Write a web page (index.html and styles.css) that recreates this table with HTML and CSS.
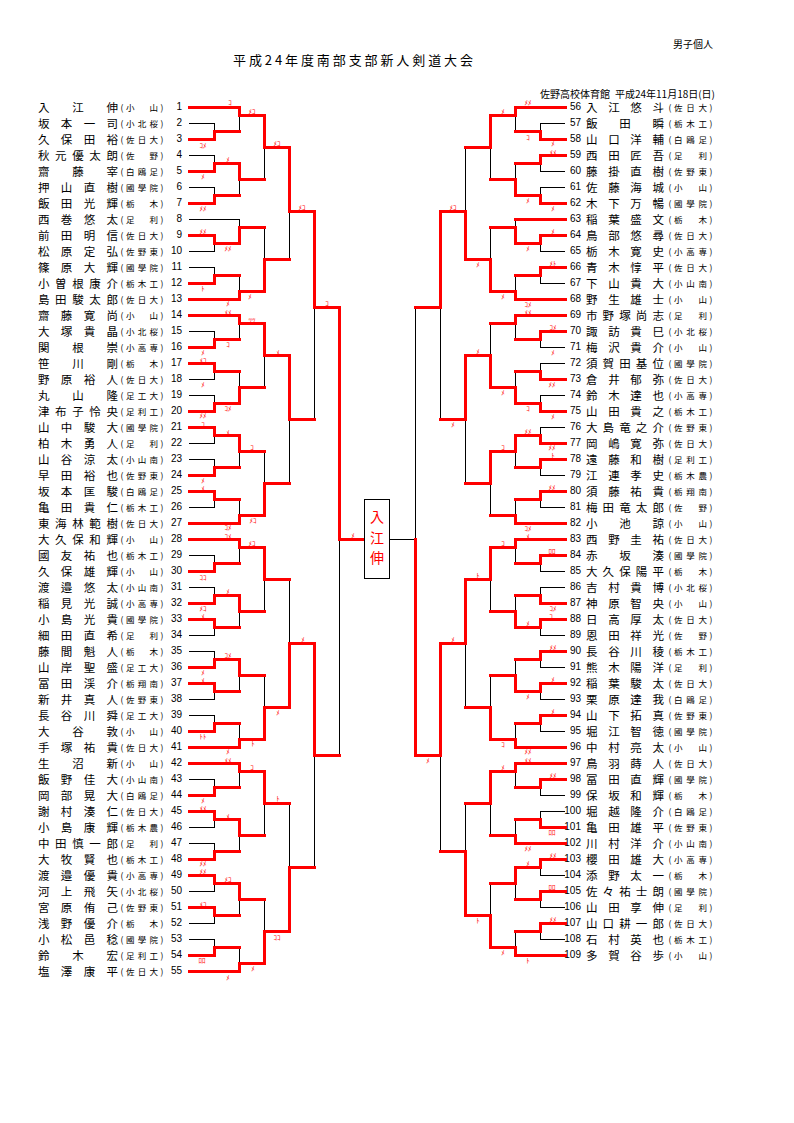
FILE: index.html
```html
<!DOCTYPE html>
<html lang="ja">
<head>
<meta charset="utf-8">
<title>平成24年度南部支部新人剣道大会</title>
<link rel="stylesheet" href="styles.css">
</head>
<body>
<div class="page">
  <header class="head">
    <div class="label">男子個人</div>
    <h1 class="title">平成24年度南部支部新人剣道大会</h1>
    <div class="venue"><span>佐野高校体育館</span><span class="date">平成24年11月18日(日)</span></div>
  </header>

  <div class="lists">
    <div class="list left">
      <div class="row"><span class="nm">入江伸</span><span class="sc">小山</span><span class="no">1</span></div>
      <div class="row"><span class="nm">坂本一司</span><span class="sc">小北桜</span><span class="no">2</span></div>
      <div class="row"><span class="nm">久保田裕</span><span class="sc">佐日大</span><span class="no">3</span></div>
      <div class="row"><span class="nm">秋元優太朗</span><span class="sc">佐野</span><span class="no">4</span></div>
      <div class="row"><span class="nm">齋藤宰</span><span class="sc">白鴎足</span><span class="no">5</span></div>
      <div class="row"><span class="nm">押山直樹</span><span class="sc">國學院</span><span class="no">6</span></div>
      <div class="row"><span class="nm">飯田光輝</span><span class="sc">栃木</span><span class="no">7</span></div>
      <div class="row"><span class="nm">西巻悠太</span><span class="sc">足利</span><span class="no">8</span></div>
      <div class="row"><span class="nm">前田明信</span><span class="sc">佐日大</span><span class="no">9</span></div>
      <div class="row"><span class="nm">松原定弘</span><span class="sc">佐野東</span><span class="no">10</span></div>
      <div class="row"><span class="nm">篠原大輝</span><span class="sc">國學院</span><span class="no">11</span></div>
      <div class="row"><span class="nm">小曽根康介</span><span class="sc">栃木工</span><span class="no">12</span></div>
      <div class="row"><span class="nm">島田駿太郎</span><span class="sc">佐日大</span><span class="no">13</span></div>
      <div class="row"><span class="nm">齋藤寛尚</span><span class="sc">小山</span><span class="no">14</span></div>
      <div class="row"><span class="nm">大塚貴晶</span><span class="sc">小北桜</span><span class="no">15</span></div>
      <div class="row"><span class="nm">関根崇</span><span class="sc">小高専</span><span class="no">16</span></div>
      <div class="row"><span class="nm">笹川剛</span><span class="sc">栃木</span><span class="no">17</span></div>
      <div class="row"><span class="nm">野原裕人</span><span class="sc">佐日大</span><span class="no">18</span></div>
      <div class="row"><span class="nm">丸山隆</span><span class="sc">足工大</span><span class="no">19</span></div>
      <div class="row"><span class="nm">津布子怜央</span><span class="sc">足利工</span><span class="no">20</span></div>
      <div class="row"><span class="nm">山中駿大</span><span class="sc">國學院</span><span class="no">21</span></div>
      <div class="row"><span class="nm">柏木勇人</span><span class="sc">足利</span><span class="no">22</span></div>
      <div class="row"><span class="nm">山谷涼太</span><span class="sc">小山南</span><span class="no">23</span></div>
      <div class="row"><span class="nm">早田裕也</span><span class="sc">佐野東</span><span class="no">24</span></div>
      <div class="row"><span class="nm">坂本匡駿</span><span class="sc">白鴎足</span><span class="no">25</span></div>
      <div class="row"><span class="nm">亀田貴仁</span><span class="sc">栃木工</span><span class="no">26</span></div>
      <div class="row"><span class="nm">東海林範樹</span><span class="sc">佐日大</span><span class="no">27</span></div>
      <div class="row"><span class="nm">大久保和輝</span><span class="sc">小山</span><span class="no">28</span></div>
      <div class="row"><span class="nm">國友祐也</span><span class="sc">栃木工</span><span class="no">29</span></div>
      <div class="row"><span class="nm">久保雄輝</span><span class="sc">小山</span><span class="no">30</span></div>
      <div class="row"><span class="nm">渡邉悠太</span><span class="sc">小山南</span><span class="no">31</span></div>
      <div class="row"><span class="nm">稲見光誠</span><span class="sc">小高専</span><span class="no">32</span></div>
      <div class="row"><span class="nm">小島光貴</span><span class="sc">國學院</span><span class="no">33</span></div>
      <div class="row"><span class="nm">細田直希</span><span class="sc">足利</span><span class="no">34</span></div>
      <div class="row"><span class="nm">藤間魁人</span><span class="sc">栃木</span><span class="no">35</span></div>
      <div class="row"><span class="nm">山岸聖盛</span><span class="sc">足工大</span><span class="no">36</span></div>
      <div class="row"><span class="nm">冨田渓介</span><span class="sc">栃翔南</span><span class="no">37</span></div>
      <div class="row"><span class="nm">新井真人</span><span class="sc">佐野東</span><span class="no">38</span></div>
      <div class="row"><span class="nm">長谷川舜</span><span class="sc">足工大</span><span class="no">39</span></div>
      <div class="row"><span class="nm">大谷敦</span><span class="sc">小山</span><span class="no">40</span></div>
      <div class="row"><span class="nm">手塚祐貴</span><span class="sc">佐日大</span><span class="no">41</span></div>
      <div class="row"><span class="nm">生沼新</span><span class="sc">小山</span><span class="no">42</span></div>
      <div class="row"><span class="nm">飯野佳大</span><span class="sc">小山南</span><span class="no">43</span></div>
      <div class="row"><span class="nm">岡部晃大</span><span class="sc">白鴎足</span><span class="no">44</span></div>
      <div class="row"><span class="nm">謝村湊仁</span><span class="sc">佐日大</span><span class="no">45</span></div>
      <div class="row"><span class="nm">小島康輝</span><span class="sc">栃木農</span><span class="no">46</span></div>
      <div class="row"><span class="nm">中田慎一郎</span><span class="sc">足利</span><span class="no">47</span></div>
      <div class="row"><span class="nm">大牧賢也</span><span class="sc">栃木工</span><span class="no">48</span></div>
      <div class="row"><span class="nm">渡邉優貴</span><span class="sc">小高専</span><span class="no">49</span></div>
      <div class="row"><span class="nm">河上飛矢</span><span class="sc">小北桜</span><span class="no">50</span></div>
      <div class="row"><span class="nm">宮原侑己</span><span class="sc">佐野東</span><span class="no">51</span></div>
      <div class="row"><span class="nm">浅野優介</span><span class="sc">栃木</span><span class="no">52</span></div>
      <div class="row"><span class="nm">小松邑稔</span><span class="sc">國學院</span><span class="no">53</span></div>
      <div class="row"><span class="nm">鈴木宏</span><span class="sc">足利工</span><span class="no">54</span></div>
      <div class="row"><span class="nm">塩澤康平</span><span class="sc">佐日大</span><span class="no">55</span></div>
    </div>

    <div class="list right">
      <div class="row"><span class="no">56</span><span class="nm">入江悠斗</span><span class="sc">佐日大</span></div>
      <div class="row"><span class="no">57</span><span class="nm">飯田瞬</span><span class="sc">栃木工</span></div>
      <div class="row"><span class="no">58</span><span class="nm">山口洋輔</span><span class="sc">白鴎足</span></div>
      <div class="row"><span class="no">59</span><span class="nm">西田匠吾</span><span class="sc">足利</span></div>
      <div class="row"><span class="no">60</span><span class="nm">藤掛直樹</span><span class="sc">佐野東</span></div>
      <div class="row"><span class="no">61</span><span class="nm">佐藤海城</span><span class="sc">小山</span></div>
      <div class="row"><span class="no">62</span><span class="nm">木下万暢</span><span class="sc">國學院</span></div>
      <div class="row"><span class="no">63</span><span class="nm">稲葉盛文</span><span class="sc">栃木</span></div>
      <div class="row"><span class="no">64</span><span class="nm">鳥部悠尋</span><span class="sc">佐日大</span></div>
      <div class="row"><span class="no">65</span><span class="nm">栃木寛史</span><span class="sc">小高専</span></div>
      <div class="row"><span class="no">66</span><span class="nm">青木惇平</span><span class="sc">佐日大</span></div>
      <div class="row"><span class="no">67</span><span class="nm">下山貴大</span><span class="sc">小山南</span></div>
      <div class="row"><span class="no">68</span><span class="nm">野生雄士</span><span class="sc">小山</span></div>
      <div class="row"><span class="no">69</span><span class="nm">市野塚尚志</span><span class="sc">足利</span></div>
      <div class="row"><span class="no">70</span><span class="nm">諏訪貴巳</span><span class="sc">小北桜</span></div>
      <div class="row"><span class="no">71</span><span class="nm">梅沢貴介</span><span class="sc">小山</span></div>
      <div class="row"><span class="no">72</span><span class="nm">須賀田基位</span><span class="sc">國學院</span></div>
      <div class="row"><span class="no">73</span><span class="nm">倉井郁弥</span><span class="sc">佐日大</span></div>
      <div class="row"><span class="no">74</span><span class="nm">鈴木達也</span><span class="sc">小高専</span></div>
      <div class="row"><span class="no">75</span><span class="nm">山田貴之</span><span class="sc">栃木工</span></div>
      <div class="row"><span class="no">76</span><span class="nm">大島竜之介</span><span class="sc">佐野東</span></div>
      <div class="row"><span class="no">77</span><span class="nm">岡嶋寛弥</span><span class="sc">佐日大</span></div>
      <div class="row"><span class="no">78</span><span class="nm">遠藤和樹</span><span class="sc">足利工</span></div>
      <div class="row"><span class="no">79</span><span class="nm">江連孝史</span><span class="sc">栃木農</span></div>
      <div class="row"><span class="no">80</span><span class="nm">須藤祐貴</span><span class="sc">栃翔南</span></div>
      <div class="row"><span class="no">81</span><span class="nm">梅田竜太郎</span><span class="sc">佐野</span></div>
      <div class="row"><span class="no">82</span><span class="nm">小池諒</span><span class="sc">小山</span></div>
      <div class="row"><span class="no">83</span><span class="nm">西野圭祐</span><span class="sc">佐日大</span></div>
      <div class="row"><span class="no">84</span><span class="nm">赤坂湊</span><span class="sc">國學院</span></div>
      <div class="row"><span class="no">85</span><span class="nm">大久保陽平</span><span class="sc">栃木</span></div>
      <div class="row"><span class="no">86</span><span class="nm">吉村貴博</span><span class="sc">小北桜</span></div>
      <div class="row"><span class="no">87</span><span class="nm">神原智央</span><span class="sc">小山</span></div>
      <div class="row"><span class="no">88</span><span class="nm">日高厚太</span><span class="sc">佐日大</span></div>
      <div class="row"><span class="no">89</span><span class="nm">恩田祥光</span><span class="sc">佐野</span></div>
      <div class="row"><span class="no">90</span><span class="nm">長谷川稜</span><span class="sc">栃木工</span></div>
      <div class="row"><span class="no">91</span><span class="nm">熊木陽洋</span><span class="sc">足利</span></div>
      <div class="row"><span class="no">92</span><span class="nm">稲葉駿太</span><span class="sc">佐日大</span></div>
      <div class="row"><span class="no">93</span><span class="nm">栗原達我</span><span class="sc">白鴎足</span></div>
      <div class="row"><span class="no">94</span><span class="nm">山下拓真</span><span class="sc">佐野東</span></div>
      <div class="row"><span class="no">95</span><span class="nm">堀江智徳</span><span class="sc">國學院</span></div>
      <div class="row"><span class="no">96</span><span class="nm">中村亮太</span><span class="sc">小山</span></div>
      <div class="row"><span class="no">97</span><span class="nm">鳥羽蒔人</span><span class="sc">佐日大</span></div>
      <div class="row"><span class="no">98</span><span class="nm">冨田直輝</span><span class="sc">國學院</span></div>
      <div class="row"><span class="no">99</span><span class="nm">保坂和輝</span><span class="sc">栃木</span></div>
      <div class="row"><span class="no">100</span><span class="nm">堀越隆介</span><span class="sc">白鴎足</span></div>
      <div class="row"><span class="no">101</span><span class="nm">亀田雄平</span><span class="sc">佐野東</span></div>
      <div class="row"><span class="no">102</span><span class="nm">川村洋介</span><span class="sc">小山南</span></div>
      <div class="row"><span class="no">103</span><span class="nm">櫻田雄大</span><span class="sc">小高専</span></div>
      <div class="row"><span class="no">104</span><span class="nm">添野太一</span><span class="sc">栃木</span></div>
      <div class="row"><span class="no">105</span><span class="nm">佐々祐士朗</span><span class="sc">國學院</span></div>
      <div class="row"><span class="no">106</span><span class="nm">山田享伸</span><span class="sc">足利</span></div>
      <div class="row"><span class="no">107</span><span class="nm">山口耕一郎</span><span class="sc">佐日大</span></div>
      <div class="row"><span class="no">108</span><span class="nm">石村英也</span><span class="sc">栃木工</span></div>
      <div class="row"><span class="no">109</span><span class="nm">多賀谷歩</span><span class="sc">小山</span></div>
    </div>
  </div>

  <svg class="bracket" width="794" height="1123" viewBox="0 0 794 1123" xmlns="http://www.w3.org/2000/svg">
    <path class="ln-black" d="M189 123H214V131M189 155H214V163M189 187H214V195M189 251H214V243M189 267H214V275M189 331H214V339M189 379H214V371M189 395H214V403M189 443H214V435M189 459H214V467M189 507H214V499M189 555H214V563M189 587H214V595M189 635H214V627M189 651H214V659M189 699H214V691M189 715H214V723M189 779H214V787M189 827H214V819M189 843H214V851M189 891H214V883M189 923H214V915M189 939H214V947M189 219H239
    M239 115V131M239 179V195M239 219V227M239 275V291M239 323V339M239 371V387M239 451V467M239 499V515M239 547V563M239 611V627M239 675V691M239 723V739M239 771V787M239 835V851M239 899V915M239 947V963
    M264 147V179M264 227V259M264 355V387M264 451V483M264 579V611M264 675V707M264 803V835M264 899V931
    M289 211V259M289 419V483M289 579V643M289 803V867M314 307V419M314 755V867M339 539V755
    M565 123H540V131M565 171H540V163M565 187H540V195M565 251H540V243M565 283H540V275M565 347H540V339M565 363H540V371M565 395H540V403M565 427H540V435M565 475H540V467M565 507H540V499M565 571H540V563M565 587H540V595M565 635H540V627M565 667H540V659M565 699H540V691M565 731H540V723M565 795H540V787M565 811H540V819M565 875H540V867M565 907H540V899M565 939H540V931
    M515 115V131M515 163V179M515 219V227M515 275V291M515 323V339M515 371V387M515 451V467M515 499V515M515 547V563M515 595V611M515 659V675M515 723V739M515 771V787M515 819V835M515 883V899M515 931V947
    M490 147V179M490 227V259M490 323V355M490 483V515M490 579V611M490 675V707M490 803V835M490 883V915
    M465 147V211M465 419V483M465 643V707M465 803V851M440 307V419M440 755V851M415 307V539M415 539H389"/>
    <path class="ln-red" d="M189 139H214V131H239M189 171H214V163H239M189 203H214V195H239M189 235H214V243H239M189 283H214V275H239M189 347H214V339H239M189 363H214V371H239M189 411H214V403H239M189 427H214V435H239M189 475H214V467H239M189 491H214V499H239M189 571H214V563H239M189 603H214V595H239M189 619H214V627H239M189 667H214V659H239M189 683H214V691H239M189 731H214V723H239M189 795H214V787H239M189 811H214V819H239M189 859H214V851H239M189 875H214V883H239M189 907H214V915H239M189 955H214V947H239
    M189 107H239M189 299H239M189 315H239M189 523H239M189 539H239M189 747H239M189 763H239M189 971H239
    M239 107V115H264M239 163V179H264M239 243V227H264M239 299V291H264M239 315V323H264M239 403V387H264M239 435V451H264M239 523V515H264M239 539V547H264M239 595V611H264M239 659V675H264M239 747V739H264M239 763V771H264M239 819V835H264M239 883V899H264M239 971V963H264
    M264 115V147H289M264 291V259H289M264 323V355H289M264 515V483H289M264 547V579H289M264 739V707H289M264 771V803H289M264 963V931H289
    M289 147V211H314M289 355V419H314M289 707V643H314M289 931V867H314M314 211V307H339M314 643V755H339M339 307V539H364
    M565 139H540V131H515M565 155H540V163H515M565 203H540V195H515M565 235H540V243H515M565 267H540V275H515M565 331H540V339H515M565 379H540V371H515M565 411H540V403H515M565 443H540V435H515M565 459H540V467H515M565 491H540V499H515M565 555H540V563H515M565 603H540V595H515M565 619H540V627H515M565 651H540V659H515M565 683H540V691H515M565 715H540V723H515M565 779H540V787H515M565 827H540V819H515M565 859H540V867H515M565 891H540V899H515M565 923H540V931H515
    M565 107H515M565 219H515M565 299H515M565 315H515M565 523H515M565 539H515M565 747H515M565 763H515M565 843H515M565 955H515
    M515 107V115H490M515 195V179H490M515 243V227H490M515 299V291H490M515 315V323H490M515 403V387H490M515 435V451H490M515 523V515H490M515 539V547H490M515 627V611H490M515 691V675H490M515 747V739H490M515 763V771H490M515 843V835H490M515 867V883H490M515 955V947H490
    M490 115V147H465M490 291V259H465M490 387V355H465M490 451V483H465M490 547V579H465M490 739V707H465M490 771V803H465M490 947V915H465
    M465 259V211H440M465 355V419H440M465 579V643H440M465 915V851H440M440 211V307H415M440 643V755H415M415 755V539"/>

    <rect class="winbox" x="364.5" y="499.5" width="25" height="79"/>
    <text class="winner" x="377" y="516">入</text>
    <text class="winner" x="377" y="537">江</text>
    <text class="winner" x="377" y="557">伸</text>

    <g class="marks">
      <text x="230" y="102">ｺ</text><text x="252" y="111">ﾒｺ</text><text x="203" y="145">ｺﾒ</text><text x="277" y="143">ﾒｺ</text>
      <text x="228" y="159">ﾒ</text><text x="203" y="176">ﾒ</text><text x="203" y="208">ﾒﾒ</text><text x="302" y="207">ﾒｺ</text>
      <text x="203" y="231">ﾒﾒ</text><text x="228" y="248">ﾒﾒ</text><text x="203" y="288">ﾄ</text><text x="250" y="296">ﾒ</text>
      <text x="228" y="303">ﾒ</text><text x="228" y="312">ﾒﾒ</text><text x="327" y="303">ｺ</text><text x="252" y="320">ﾂﾂ</text>
      <text x="228" y="344">ｺ</text><text x="203" y="352">ﾒ</text><text x="203" y="360">ﾒｺ</text><text x="278" y="352">ﾒ</text>
      <text x="203" y="384">ﾒ</text><text x="228" y="408">ｺﾒ</text><text x="203" y="415">ﾒﾒ</text><text x="203" y="424">ｺ</text>
      <text x="228" y="432">ﾒ</text><text x="252" y="447">ｺ</text><text x="203" y="480">ﾒ</text><text x="203" y="488">ﾒ</text>
      <text x="253" y="520">ﾒｺ</text><text x="228" y="527">ｺﾒ</text><text x="228" y="536">ｺﾒ</text><text x="353" y="535">ﾒ</text>
      <text x="252" y="543">ﾒｺ</text><text x="203" y="577">ｺｺ</text><text x="228" y="591">ﾒ</text><text x="203" y="608">ﾒｺ</text>
      <text x="203" y="616">ﾒ</text><text x="303" y="639">ﾒ</text><text x="228" y="655">ｺﾒ</text><text x="203" y="672">ﾒ</text>
      <text x="203" y="680">ﾒ</text><text x="278" y="712">ﾒ</text><text x="203" y="736">ﾄﾄ</text><text x="253" y="743">ﾄ</text>
      <text x="228" y="751">ﾒ</text><text x="228" y="760">ﾒﾒ</text><text x="252" y="767">ｺ</text><text x="203" y="800">ﾒ</text>
      <text x="203" y="808">ﾒﾒ</text><text x="228" y="816">ﾒ</text><text x="278" y="798">ﾄ</text><text x="203" y="863">ﾒﾒ</text>
      <text x="203" y="871">ﾒﾒ</text><text x="228" y="879">ﾒｺ</text><text x="203" y="904">ﾒｺ</text><text x="277" y="937">ｺｺ</text>
      <text x="202" y="960">ﾛﾛ</text><text x="253" y="968">ﾒ</text><text x="228" y="977">ﾒ</text>

      <text x="528" y="102">ﾒﾒ</text><text x="503" y="111">ﾒ</text><text x="528" y="137">ｺ</text><text x="553" y="143">ﾒ</text>
      <text x="553" y="152">ﾒﾒ</text><text x="528" y="200">ﾒ</text><text x="553" y="208">ﾒ</text><text x="453" y="207">ﾒｺ</text>
      <text x="553" y="231">ﾒ</text><text x="528" y="248">ﾒ</text><text x="553" y="263">ﾒﾄ</text><text x="478" y="264">ﾒ</text>
      <text x="503" y="296">ﾒ</text><text x="528" y="304">ｺﾒ</text><text x="528" y="312">ﾒﾒ</text><text x="553" y="327">ｺﾒ</text>
      <text x="553" y="352">ﾒ</text><text x="478" y="351">ﾒ</text><text x="503" y="392">ﾒ</text><text x="552" y="384">ﾒﾒ</text>
      <text x="528" y="408">ｺ</text><text x="553" y="416">ﾒ</text><text x="453" y="424">ﾒ</text><text x="528" y="431">ﾒﾒ</text>
      <text x="552" y="447">ﾒﾒ</text><text x="553" y="455">ﾄ</text><text x="503" y="447">ｺ</text><text x="552" y="487">ﾒﾒ</text>
      <text x="528" y="528">ｺﾒ</text><text x="528" y="536">ﾒ</text><text x="503" y="543">ｺ</text><text x="552" y="551">ﾛﾛ</text>
      <text x="478" y="575">ﾄ</text><text x="553" y="608">ｺﾒ</text><text x="551" y="616">ｺ</text><text x="528" y="623">ﾒ</text>
      <text x="453" y="639">ﾒ</text><text x="553" y="647">ﾒﾒ</text><text x="553" y="679">ﾒ</text><text x="528" y="696">ﾒ</text>
      <text x="553" y="711">ﾒ</text><text x="503" y="744">ｺ</text><text x="528" y="751">ﾒﾒ</text><text x="428" y="760">ﾒ</text>
      <text x="528" y="760">ﾒﾒ</text><text x="503" y="767">ﾒ</text><text x="553" y="775">ﾒﾒ</text><text x="552" y="832">ﾛﾛ</text>
      <text x="528" y="848">ﾒﾒ</text><text x="528" y="863">ﾒ</text><text x="553" y="855">ﾒﾒ</text><text x="552" y="887">ﾛﾛ</text>
      <text x="478" y="920">ﾄ</text><text x="553" y="919">ﾒﾒ</text><text x="503" y="952">ﾒ</text><text x="528" y="960">ﾄ</text>
    </g>
  </svg>
</div>
</body>
</html>
```

FILE: styles.css
```css
html, body {
  margin: 0;
  padding: 0;
  background: #ffffff;
}

.page {
  position: relative;
  width: 794px;
  height: 1123px;
  overflow: hidden;
  background: #ffffff;
  color: #000000;
  font-family: "Noto Sans CJK JP", "Noto Sans", sans-serif;
}

.head {
  display: block;
}

.label {
  padding-top: 38px;
  padding-right: 81px;
  height: 12px;
  line-height: 12px;
  font-size: 10px;
  text-align: right;
}

.title {
  margin: 2px 0 0 0;
  padding-left: 233px;
  height: 16px;
  line-height: 16px;
  font-size: 13px;
  font-weight: 400;
  letter-spacing: 2.9px;
}

.venue {
  margin-top: 20px;
  padding-right: 79px;
  height: 11px;
  line-height: 11px;
  font-size: 10px;
  text-align: right;
}

.venue .date {
  margin-left: 5px;
}

.lists {
  display: flex;
  padding-left: 38px;
}

.list {
  display: flex;
  flex-direction: column;
}

.list.left {
  width: 144px;
}

.list.right {
  margin-left: 380px;
}

.row {
  display: flex;
  align-items: center;
  height: 16px;
  line-height: 16px;
}

.nm {
  display: block;
  font-size: 11.5px;
  text-align: justify;
  text-align-last: justify;
  text-justify: inter-character;
}

.left .nm {
  width: 80px;
}

.right .nm {
  width: 78px;
  margin-right: 2px;
}

.sc {
  display: grid;
  grid-template-columns: 8px 1fr 8px;
  width: 48px;
  font-size: 8.5px;
  text-align: justify;
  text-align-last: justify;
  text-justify: inter-character;
}

.right .sc {
  width: 49px;
}

.sc::before {
  content: "(";
  text-align: center;
  text-align-last: center;
}

.sc::after {
  content: ")";
  text-align: center;
  text-align-last: center;
}

.no {
  display: block;
  font-family: "Liberation Sans", Arial, sans-serif;
  font-size: 10px;
  text-align: right;
}

.left .no {
  width: 16px;
}

.right .no {
  width: 19px;
  margin-right: 5px;
}

.bracket {
  position: absolute;
  left: 0;
  top: 0;
  pointer-events: none;
}

.ln-black {
  fill: none;
  stroke: #000000;
  stroke-width: 1;
  shape-rendering: crispEdges;
}

.ln-red {
  fill: none;
  stroke: #ff0000;
  stroke-width: 3;
  stroke-linecap: square;
  stroke-linejoin: miter;
  shape-rendering: crispEdges;
}

.winbox {
  fill: #ffffff;
  stroke: #000000;
  stroke-width: 1;
  shape-rendering: crispEdges;
}

.winner {
  fill: #ff0000;
  font-family: "Noto Sans CJK JP", sans-serif;
  font-size: 14px;
  text-anchor: middle;
  dominant-baseline: central;
}

.marks text {
  fill: #ff0000;
  font-family: "Noto Sans CJK JP", sans-serif;
  font-size: 7px;
  text-anchor: middle;
  dominant-baseline: central;
}
```
